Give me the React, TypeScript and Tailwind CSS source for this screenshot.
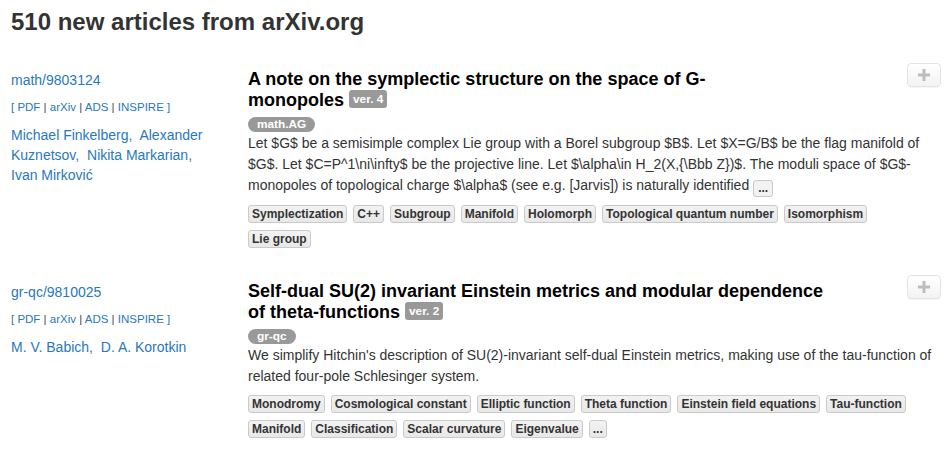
import React from 'react';

type Article = {
    id: string;
    authors: string[];
    titleMain: string;
    titleTail: string;
    version: string;
    category: string;
    abstract: string;
    more: boolean;
    keywords: string[];
    moreKeywords: boolean;
};

const articles: Article[] = [
    {
        id: 'math/9803124',
        authors: ['Michael Finkelberg', 'Alexander Kuznetsov', 'Nikita Markarian', 'Ivan Mirković'],
        titleMain: 'A note on the symplectic structure on the space of G-',
        titleTail: 'monopoles',
        version: 'ver. 4',
        category: 'math.AG',
        abstract:
            'Let $G$ be a semisimple complex Lie group with a Borel subgroup $B$. Let $X=G/B$ be the flag manifold of $G$. Let $C=P^1\\ni\\infty$ be the projective line. Let $\\alpha\\in H_2(X,{\\Bbb Z})$. The moduli space of $G$-monopoles of topological charge $\\alpha$ (see e.g. [Jarvis]) is naturally identified',
        more: true,
        keywords: ['Symplectization', 'C++', 'Subgroup', 'Manifold', 'Holomorph', 'Topological quantum number', 'Isomorphism', 'Lie group'],
        moreKeywords: false,
    },
    {
        id: 'gr-qc/9810025',
        authors: ['M. V. Babich', 'D. A. Korotkin'],
        titleMain: 'Self-dual SU(2) invariant Einstein metrics and modular dependence of theta-',
        titleTail: 'functions',
        version: 'ver. 2',
        category: 'gr-qc',
        abstract:
            "We simplify Hitchin's description of SU(2)-invariant self-dual Einstein metrics, making use of the tau-function of related four-pole Schlesinger system.",
        more: false,
        keywords: [
            'Monodromy',
            'Cosmological constant',
            'Elliptic function',
            'Theta function',
            'Einstein field equations',
            'Tau-function',
            'Manifold',
            'Classification',
            'Scalar curvature',
            'Eigenvalue',
        ],
        moreKeywords: true,
    },
];

function PlusButton() {
    return (
        <button className="-mt-[6px] flex h-[24px] w-[34px] shrink-0 items-center justify-center rounded-[4px] border border-[#e3e3e3] bg-gradient-to-b from-white to-[#f3f3f3] shadow-[0_1px_1px_rgba(0,0,0,0.04)]">
            <svg width="12" height="12" viewBox="0 0 12 12">
                <rect x="0" y="4.5" width="12" height="3" fill="#bdbdbd" />
                <rect x="4.5" y="0" width="3" height="12" fill="#bdbdbd" />
            </svg>
        </button>
    );
}

function Keyword({ label }: { label: string }) {
    return (
        <span className="rounded-[3px] border border-[#cacaca] bg-gradient-to-b from-[#f2f2f2] to-[#e8e8e8] px-[3px] text-[12px] leading-[16px] font-bold text-[#333]">
            {label}
        </span>
    );
}

function ArticleRow({ article }: { article: Article }) {
    return (
        <div className="flex">
            {/* left column: id, links, authors */}
            <div className="w-[237px] shrink-0 pt-[1px] pr-[28px]">
                <a className="block text-[14px] leading-[20px] text-[#2878be]">{article.id}</a>
                <div className="mt-[9px] text-[11.5px] leading-[16px] text-[#2878be]">
                    [ PDF <span className="text-[#444]">|</span> arXiv <span className="text-[#444]">|</span> ADS{' '}
                    <span className="text-[#444]">|</span> INSPIRE ]
                </div>
                <div className="mt-[10px] text-[14px] leading-[20px] text-[#2878be]">
                    {article.authors.map((name, i) => (
                        <React.Fragment key={name}>
                            <a>{name}</a>
                            {i < article.authors.length - 1 && ',\u00a0 '}
                        </React.Fragment>
                    ))}
                </div>
            </div>

            {/* right column */}
            <div className="min-w-0 flex-1">
                <div className="flex items-start justify-between">
                    <h2 className="w-[585px] text-[18px] leading-[21px] font-bold text-black">
                        {article.titleMain}
                        <span className="whitespace-nowrap">
                            {article.titleTail}{' '}
                            <span className="inline-block rounded-[3px] bg-[#999] px-[4px] py-[2px] align-[3px] text-[11.844px] leading-[14px] font-bold text-white">
                                {article.version}
                            </span>
                        </span>
                    </h2>
                    <PlusButton />
                </div>
                <div className="mt-[6px] flex">
                    <span className="rounded-[9px] bg-[#999] px-[9px] text-[11.844px] leading-[15px] font-bold text-white">
                        {article.category}
                    </span>
                </div>
                <p className="mt-[1px] text-[14px] leading-[21px] text-[#333]">
                    {article.abstract}
                    {article.more && (
                        <span className="ml-[4px] inline-block h-[17px] rounded-[3px] border border-[#c8c8c8] bg-[#f2f2f2] px-[4px] align-[-2px] text-[12px] leading-[14px] font-bold text-[#333]">
                            ...
                        </span>
                    )}
                </p>
                <div className="mt-[8px] flex max-w-[680px] flex-wrap gap-x-[6px] gap-y-[7px]">
                    {article.keywords.map((k) => (
                        <Keyword key={k} label={k} />
                    ))}
                    {article.moreKeywords && <Keyword label="..." />}
                </div>
            </div>
        </div>
    );
}

export default function App() {
    return (
        <div className="min-h-[459px] bg-white px-[11px] pt-[8px] font-['Liberation_Sans',Arial,sans-serif]">
            <h1 className="text-[24px] leading-[28px] font-bold text-[#333]">510 new articles from arXiv.org</h1>
            <div className="mt-[33px] flex flex-col gap-[33px]">
                {articles.map((a) => (
                    <ArticleRow key={a.id} article={a} />
                ))}
            </div>
        </div>
    );
}
